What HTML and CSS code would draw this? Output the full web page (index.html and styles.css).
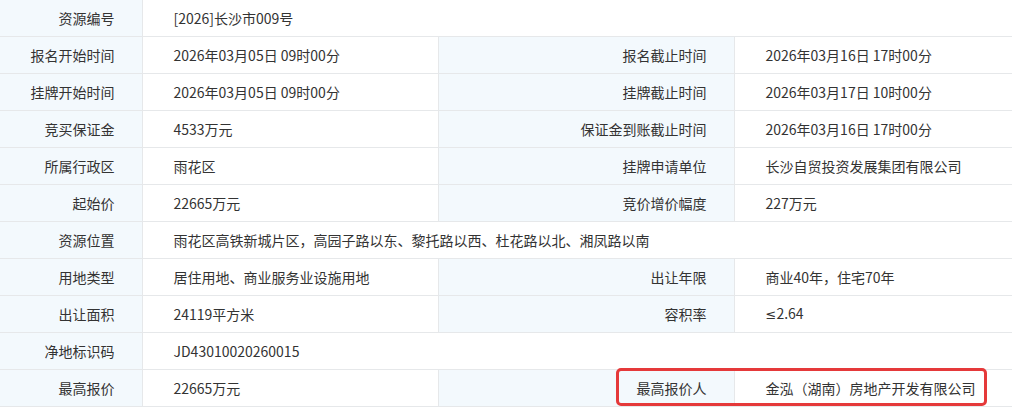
FILE: index.html
```html
<!DOCTYPE html>
<html lang="zh-CN">
<head>
  <meta charset="UTF-8">
  <meta name="viewport" content="width=device-width, initial-scale=1.0">
  <title>资源信息</title>
  <link rel="stylesheet" href="styles.css">
</head>
<body>
  <div class="wrap">
    <table class="info-table">
      <colgroup>
        <col class="c-label1">
        <col class="c-value1">
        <col class="c-label2">
        <col class="c-value2">
      </colgroup>
      <tbody>
        <tr>
          <th>资源编号</th>
          <td colspan="3">[2026]长沙市009号</td>
        </tr>
        <tr>
          <th>报名开始时间</th>
          <td>2026年03月05日 09时00分</td>
          <th>报名截止时间</th>
          <td>2026年03月16日 17时00分</td>
        </tr>
        <tr>
          <th>挂牌开始时间</th>
          <td>2026年03月05日 09时00分</td>
          <th>挂牌截止时间</th>
          <td>2026年03月17日 10时00分</td>
        </tr>
        <tr>
          <th>竞买保证金</th>
          <td>4533万元</td>
          <th>保证金到账截止时间</th>
          <td>2026年03月16日 17时00分</td>
        </tr>
        <tr>
          <th>所属行政区</th>
          <td>雨花区</td>
          <th>挂牌申请单位</th>
          <td>长沙自贸投资发展集团有限公司</td>
        </tr>
        <tr>
          <th>起始价</th>
          <td>22665万元</td>
          <th>竞价增价幅度</th>
          <td>227万元</td>
        </tr>
        <tr>
          <th>资源位置</th>
          <td colspan="3">雨花区高铁新城片区，高园子路以东、黎托路以西、杜花路以北、湘凤路以南</td>
        </tr>
        <tr>
          <th>用地类型</th>
          <td>居住用地、商业服务业设施用地</td>
          <th>出让年限</th>
          <td>商业40年，住宅70年</td>
        </tr>
        <tr>
          <th>出让面积</th>
          <td>24119平方米</td>
          <th>容积率</th>
          <td><span class="sym">≤</span>2.64</td>
        </tr>
        <tr>
          <th>净地标识码</th>
          <td colspan="3">JD43010020260015</td>
        </tr>
        <tr>
          <th>最高报价</th>
          <td>22665万元</td>
          <th>最高报价人</th>
          <td>金泓（湖南）房地产开发有限公司</td>
        </tr>
      </tbody>
    </table>
    <!-- 标注框 -->
    <div class="mark"></div>
  </div>
</body>
</html>
```

FILE: styles.css
```css
/* 基础 */
body {
  margin: 0;
  padding: 0;
  background-color: #ffffff;
  font-family: "Noto Sans CJK SC", "Microsoft YaHei", sans-serif;
  color: #333333;
  font-size: 14px;
}

.wrap {
  position: relative;
  width: 1012px;
}

/* 表格 */
.info-table {
  width: 1012px;
  table-layout: fixed;
  border-collapse: collapse;
}

.c-label1 { width: 142px; }
.c-value1 { width: 296px; }
.c-label2 { width: 296px; }
.c-value2 { width: 278px; }

.info-table th,
.info-table td {
  height: 36px;
  padding: 0;
  border-bottom: 1px solid #e6e8ea;
  border-right: 1px solid #e6e8ea;
  white-space: nowrap;
  font-weight: normal;
  line-height: 20px;
}

.info-table th {
  background-color: #f3f9fd;
  text-align: right;
  padding-right: 27px;
}

.info-table td {
  text-align: left;
  padding-left: 31px;
}

.info-table td:last-child {
  border-right: none;
}

.sym {
  font-family: "DejaVu Sans", sans-serif;
  font-size: 13px;
}

/* 红色标注 */
.mark {
  position: absolute;
  left: 616px;
  top: 368px;
  width: 365px;
  height: 32px;
  border: 3px solid #e5393a;
  border-radius: 5px;
}
```
